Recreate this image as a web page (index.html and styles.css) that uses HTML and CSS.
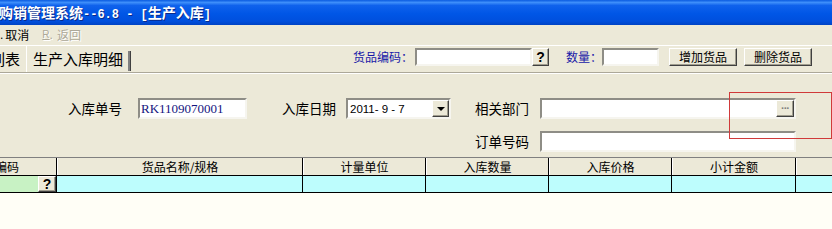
FILE: index.html
```html
<!DOCTYPE html>
<html lang="zh-CN">
<head>
<meta charset="utf-8">
<title>生产入库</title>
<link rel="stylesheet" href="styles.css">
</head>
<body>
<div class="window">
  <div class="titlebar"><span class="title">购销管理系统<span class="mono">--6.8 - [</span>生产入库<span class="mono">]</span></span></div>
  <div class="menubar">
    <span class="mi first"><span class="acc">.</span>取消</span>
    <span class="mi disabled"><span class="acc u">R</span><span class="dot">.</span>返回</span>
  </div>
  <div class="tabrow">
    <div class="tabs">
      <div class="tab back">列表</div>
      <div class="tab active">生产入库明细</div>
    </div>
    <div class="tools">
      <span class="tlabel code-l">货品编码：</span>
      <span class="field code-f"></span>
      <span class="rbtn qbtn">?</span>
      <span class="tlabel qty-l">数量：</span>
      <span class="field qty-f"></span>
      <span class="rbtn btn add">增加货品</span>
      <span class="rbtn btn del">删除货品</span>
    </div>
  </div>
  <div class="form">
    <span class="flabel l1">入库单号</span>
    <span class="field f1"><span class="val">RK1109070001</span></span>
    <span class="flabel l2">入库日期</span>
    <span class="field combo"><span class="date">2011- 9 - 7</span><span class="rbtn drop"><span class="arrow"></span></span></span>
    <span class="flabel l3">相关部门</span>
    <span class="field f3"><span class="rbtn dots">···</span></span>
    <span class="flabel l4">订单号码</span>
    <span class="field f4"></span>
  </div>
  <div class="ghead">
    <div class="hc c1"><span class="first-t">编码</span></div>
    <div class="hc c2">货品名称/规格</div>
    <div class="hc c3">计量单位</div>
    <div class="hc c4">入库数量</div>
    <div class="hc c5">入库价格</div>
    <div class="hc c6">小计金额</div>
    <div class="hc c7"></div>
  </div>
  <div class="grow">
    <div class="dc c1 green"><span class="green-fill"></span><span class="rbtn gq">?</span></div>
    <div class="dc c2"></div>
    <div class="dc c3"></div>
    <div class="dc c4"></div>
    <div class="dc c5"></div>
    <div class="dc c6"></div>
    <div class="dc c7"></div>
  </div>
  <div class="empty"></div>
  <div class="annot"></div>
</div>
</body>
</html>
```

FILE: styles.css
```css
* { box-sizing: border-box; }
html, body { margin: 0; padding: 0; }
body {
  width: 832px;
  height: 229px;
  overflow: hidden;
  background: #ECE9D8;
  font-family: "Noto Sans CJK SC", sans-serif;
  font-size: 12px;
  color: #000;
}
.window {
  position: relative;
  width: 832px;
  height: 229px;
  overflow: hidden;
  display: flex;
  flex-direction: column;
}

/* title bar */
.titlebar {
  flex: none;
  height: 25px;
  display: flex;
  align-items: center;
  background: linear-gradient(to bottom, #0A5BE0 0%, #3D8EFA 10%, #0F62EC 22%, #0056E6 55%, #004FDD 85%, #0043C4 100%);
  color: #fff;
  font-weight: bold;
  font-size: 14px;
  white-space: nowrap;
  text-shadow: 1px 1px 0 #0A2A8A;
}
.title { margin-left: -1px; line-height: 1; }
.mono { font-family: "Liberation Mono", monospace; font-size: 12px; font-weight: bold; }

/* menu bar */
.menubar {
  flex: none;
  height: 20px;
  display: flex;
  align-items: center;
  white-space: nowrap;
}
.mi { display: flex; align-items: center; line-height: 1; }
.mi.first { margin-left: 0; }
.mi.first .acc { font-family: "Liberation Sans", sans-serif; margin-right: 2px; }
.mi.disabled {
  margin-left: 13px;
  color: #ACA899;
  text-shadow: 1px 1px 0 #fff;
}
.acc.u { font-family: "Liberation Sans", sans-serif; font-size: 10px; text-decoration: underline; }
.dot { font-family: "Liberation Sans", sans-serif; margin-right: 4px; }

/* tab row with toolbar */
.tabrow {
  flex: none;
  height: 28px;
  display: flex;
  border-top: 1px solid #fff;
  border-bottom: 1px solid #ACA899;
}
.tabs { width: 131px; flex: none; display: flex; }
.tab {
  font-size: 15px;
  display: flex;
  align-items: center;
  line-height: 1;
  white-space: nowrap;
  padding-bottom: 1px;
}
.tab.back {
  margin-left: -10px;
  width: 37px;
  padding-left: 0;
  border-right: 1px solid #fff;
}
.tab.active {
  position: relative;
  width: 104px;
  padding-left: 6px;
}
.tab.active::after {
  content: "";
  position: absolute;
  right: 0;
  top: 5px;
  bottom: 1px;
  width: 2px;
  background: #808080;
  border-right: 1px solid #404040;
}
.tools {
  display: flex;
  align-items: flex-start;
  padding-top: 2px;
  margin-left: 222px;
}
.tlabel {
  color: #1818A8;
  height: 18px;
  display: flex;
  align-items: center;
  line-height: 1;
  white-space: nowrap;
}
.code-l { width: 62px; }
.qty-l { margin-left: 17px; width: 36px; }

.field {
  background: #fff;
  border-style: solid;
  border-width: 2px;
  border-color: #8E8D86 #F6F5EF #F6F5EF #8E8D86;
  display: flex;
  align-items: center;
}
.code-f { width: 117px; height: 18px; }
.qty-f { width: 57px; height: 18px; }

.rbtn {
  background: #ECE9D8;
  border: 1px solid;
  border-color: #fff #404040 #404040 #fff;
  box-shadow: inset -1px -1px 0 #A09D8E;
  display: flex;
  align-items: center;
  justify-content: center;
  line-height: 1;
  white-space: nowrap;
}
.qbtn {
  width: 17px;
  height: 18px;
  font-family: "Liberation Sans", sans-serif;
  font-weight: bold;
  font-size: 14px;
}
.btn { width: 68px; height: 18px; }
.btn.add { margin-left: 10px; }
.btn.del { margin-left: 7px; }

/* form */
.form {
  flex: none;
  height: 84px;
  display: grid;
  grid-template-columns: 68px 70px 109px 35px 64px 105px 24px 65px 256px;
  grid-template-rows: 21px 21px;
  row-gap: 12px;
  padding-top: 24px;
  border-top: 1px solid #fff;
}
.flabel {
  font-size: 13.5px;
  display: flex;
  align-items: center;
  line-height: 1;
  white-space: nowrap;
}
.l1 { grid-column: 2; grid-row: 1; }
.f1 { grid-column: 3; grid-row: 1; }
.l2 { grid-column: 5; grid-row: 1; }
.combo { grid-column: 6; grid-row: 1; height: 21px; }
.l3 { grid-column: 8; grid-row: 1; }
.f3 { grid-column: 9; grid-row: 1; justify-content: flex-end; padding-right: 0; }
.l4 { grid-column: 8; grid-row: 2; }
.f4 { grid-column: 9; grid-row: 2; }
.val {
  font-family: "Liberation Serif", serif;
  font-size: 13px;
  color: #14147E;
  padding-left: 1px;
}
.date {
  flex: 1;
  font-family: "Liberation Sans", sans-serif;
  font-size: 11.5px;
  padding-left: 2px;
  white-space: pre;
}
.drop { width: 17px; height: 17px; }
.arrow {
  width: 0;
  height: 0;
  border-left: 4px solid transparent;
  border-right: 4px solid transparent;
  border-top: 4px solid #000;
  margin-top: 1px;
}
.dots {
  width: 18px;
  height: 17px;
  color: #808080;
  font-family: "Liberation Sans", sans-serif;
  font-size: 11px;
  font-weight: bold;
  letter-spacing: -1px;
}

/* grid */
.ghead {
  flex: none;
  height: 19px;
  display: flex;
  border-top: 1px solid #808080;
  border-bottom: 1px solid #000;
}
.hc {
  height: 17px;
  display: flex;
  align-items: center;
  justify-content: center;
  line-height: 1;
  white-space: nowrap;
  border-right: 1px solid #000;
  border-left: 1px solid #fff;
  overflow: hidden;
}
.hc.c1 { justify-content: flex-start; border-left: none; }
.first-t { margin-left: -5px; }
.c1 { width: 57px; flex: none; }
.c2 { width: 246px; flex: none; }
.c3 { width: 123px; flex: none; }
.c4 { width: 123px; flex: none; }
.c5 { width: 123px; flex: none; }
.c6 { width: 124px; flex: none; }
.c7 { flex: 1; border-right: none; }

.grow {
  flex: none;
  height: 17px;
  display: flex;
  border-bottom: 1px solid #000;
}
.dc {
  height: 16px;
  background: #BDFDFD;
  border-right: 1px solid #000;
}
.dc.c7 { border-right: none; }
.dc.green { display: flex; background: #C8F2C4; }
.green-fill { width: 38px; }
.gq {
  width: 18px;
  height: 16px;
  font-family: "Liberation Sans", sans-serif;
  font-weight: bold;
  font-size: 14px;
}
.empty { flex: 1; background: #FFFEF6; }

/* annotation overlay */
.annot {
  position: absolute;
  left: 729px;
  top: 92px;
  width: 103px;
  height: 47px;
  border: 1px solid #D03A3A;
}
```
